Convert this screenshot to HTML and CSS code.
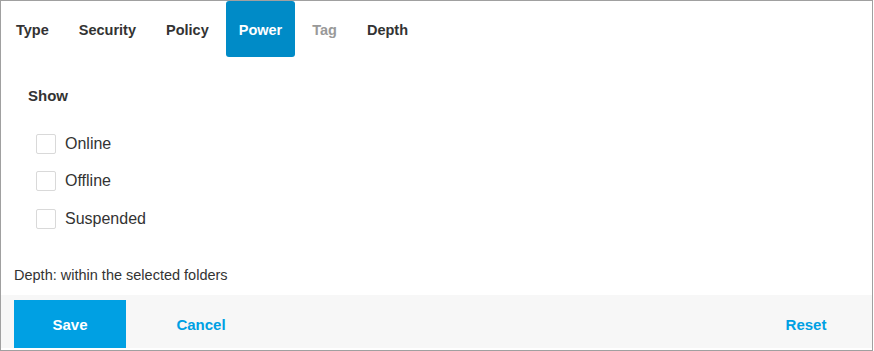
FILE: index.html
```html
<!DOCTYPE html>
<html lang="en">
<head>
<meta charset="utf-8">
<title>Filter</title>
<link rel="stylesheet" href="styles.css">
</head>
<body>
<div class="panel">
  <nav class="tabs">
    <span class="tab">Type</span>
    <span class="tab">Security</span>
    <span class="tab">Policy</span>
    <span class="tab active">Power</span>
    <span class="tab disabled">Tag</span>
    <span class="tab">Depth</span>
  </nav>
  <section class="content">
    <h2 class="heading">Show</h2>
    <ul class="options">
      <li class="option"><span class="box"></span><span class="label">Online</span></li>
      <li class="option"><span class="box"></span><span class="label">Offline</span></li>
      <li class="option"><span class="box"></span><span class="label">Suspended</span></li>
    </ul>
    <p class="depth">Depth: within the selected folders</p>
  </section>
  <footer class="footer">
    <button class="btn primary">Save</button>
    <button class="btn link">Cancel</button>
    <button class="btn link reset">Reset</button>
  </footer>
</div>
</body>
</html>
```
FILE: styles.css
```css
html, body {
  margin: 0;
  padding: 0;
  background: #fff;
}
body {
  font-family: "Liberation Sans", Arial, sans-serif;
  color: #333;
}
.panel {
  box-sizing: border-box;
  width: 873px;
  height: 351px;
  border: 1px solid #a0a0a0;
  display: flex;
  flex-direction: column;
}
.tabs {
  display: flex;
  gap: 4px;
  height: 56px;
  padding-left: 2px;
}
.tab {
  display: flex;
  align-items: center;
  padding: 2px 13px 0;
  font-size: 14.5px;
  font-weight: bold;
  color: #333;
  border-radius: 3px;
}
.tab.active {
  background: #008bc7;
  color: #fff;
}
.tab.disabled {
  color: #999;
}
.content {
  flex: 1;
  display: flex;
  flex-direction: column;
}
.heading {
  margin: 29px 0 0 27px;
  font-size: 15px;
  line-height: 20px;
  font-weight: bold;
  color: #333;
}
.options {
  list-style: none;
  margin: 19px 0 0 0;
  padding: 0 0 0 35px;
}
.option {
  display: flex;
  align-items: center;
  height: 37.5px;
}
.box {
  box-sizing: border-box;
  width: 20px;
  height: 20px;
  border: 1px solid #d9d9d9;
  border-radius: 2px;
  background: #fff;
  margin-right: 9px;
}
.label {
  font-size: 16px;
  color: #333;
}
.depth {
  margin: 29px 0 0 13px;
  font-size: 14.5px;
  line-height: 16px;
  color: #333;
}
.footer {
  display: flex;
  align-items: stretch;
  height: 53px;
  box-sizing: border-box;
  padding: 5px 0 0 13px;
  margin-bottom: 2px;
  background: #f7f7f7;
  gap: 19px;
}
.btn {
  width: 112px;
  border: 0;
  padding: 0;
  font-family: inherit;
  font-size: 15px;
  font-weight: bold;
  background: transparent;
  color: #00a0e3;
}
.btn.primary {
  background: #00a0e3;
  color: #fff;
}
.btn.reset {
  margin-left: auto;
  margin-right: 10px;
}
```
